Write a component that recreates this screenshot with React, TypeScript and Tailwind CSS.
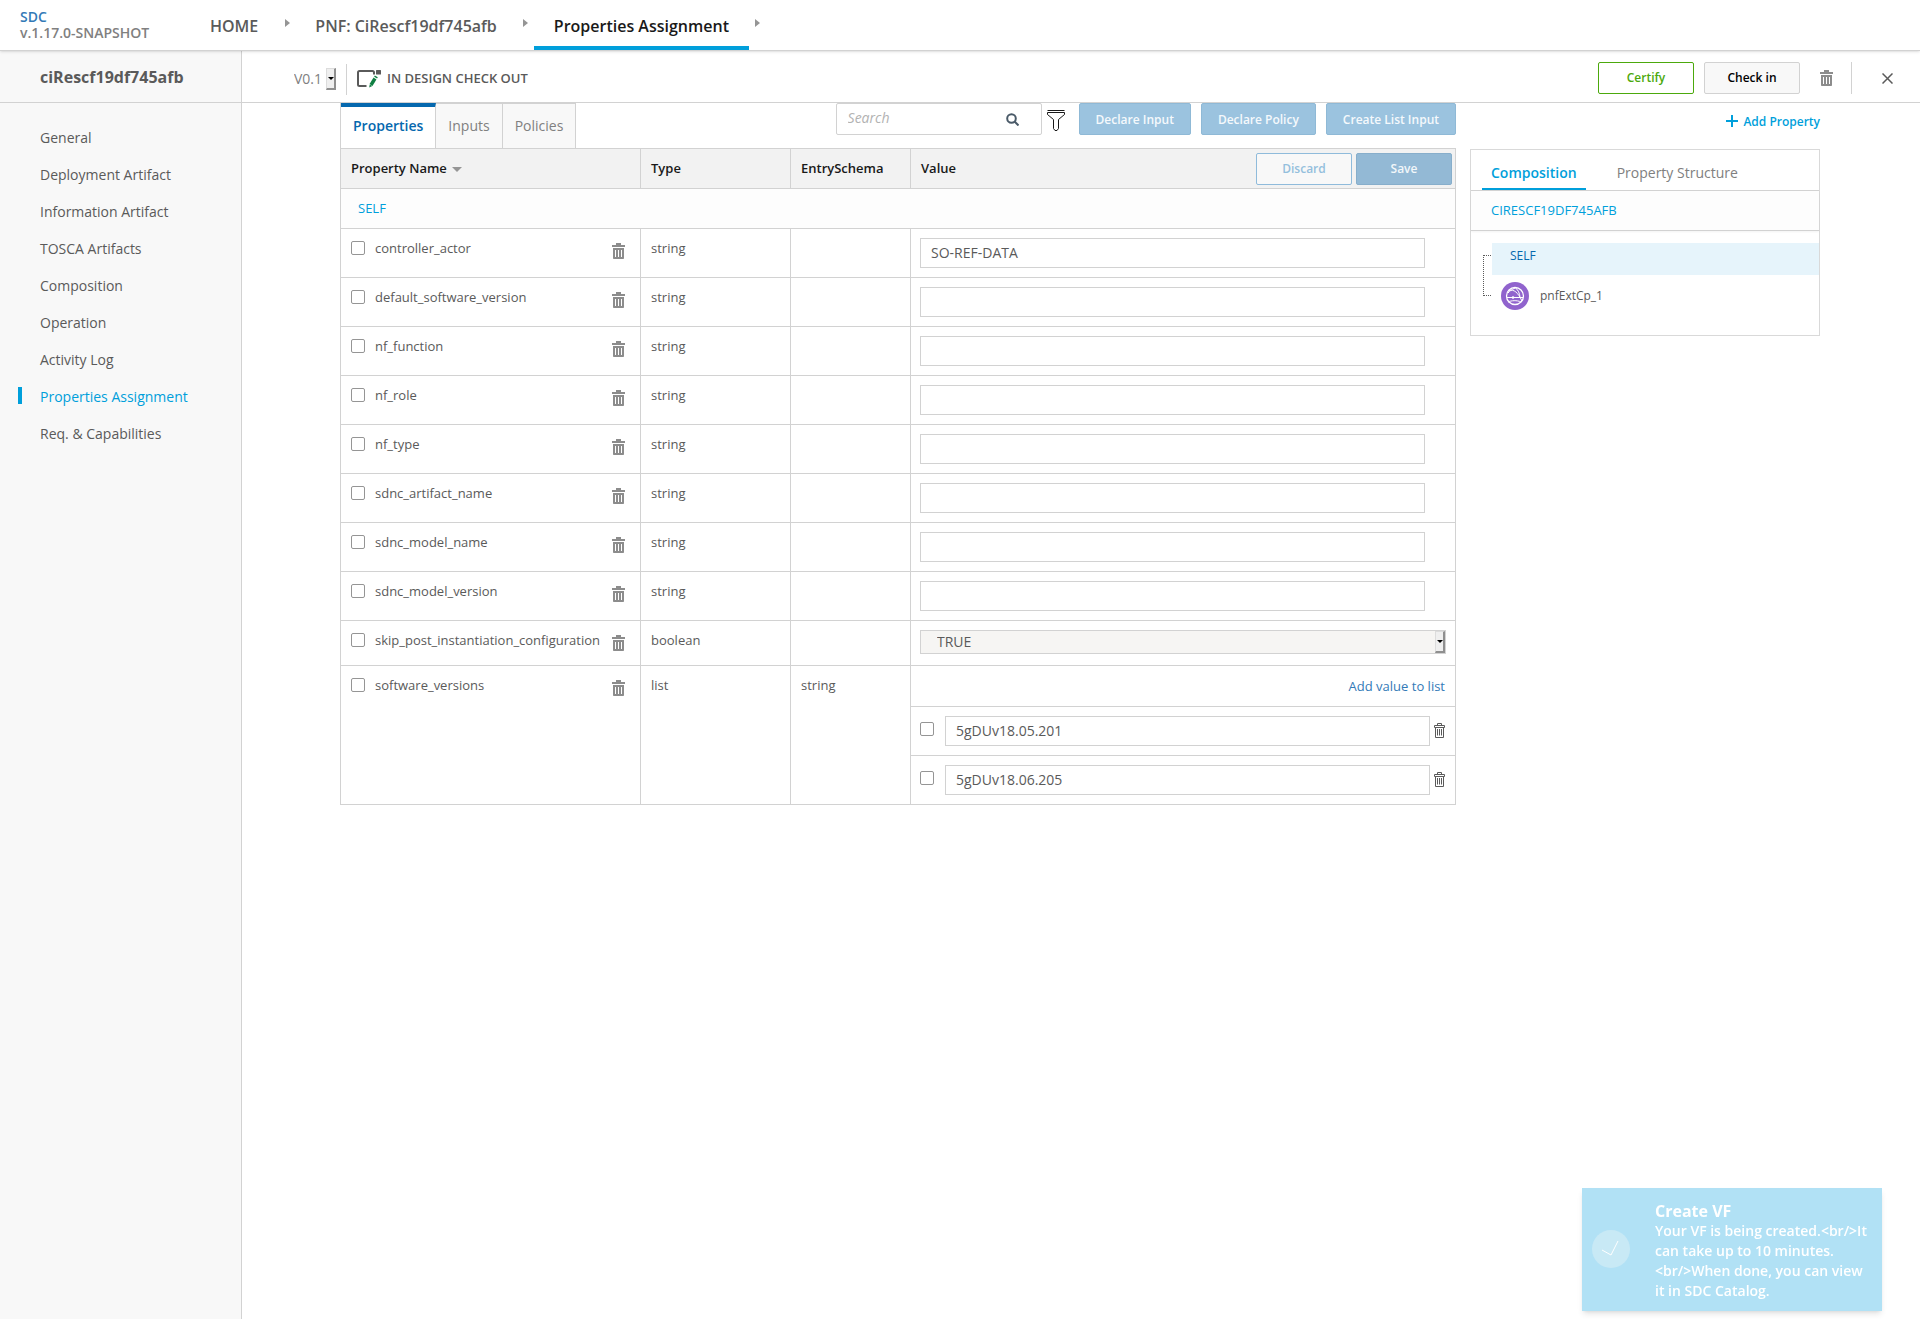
import { useState } from "react"

const MENU = [
  "General",
  "Deployment Artifact",
  "Information Artifact",
  "TOSCA Artifacts",
  "Composition",
  "Operation",
  "Activity Log",
  "Properties Assignment",
  "Req. & Capabilities",
]

const STRING_PROPERTIES = [
  { name: "controller_actor", value: "SO-REF-DATA" },
  { name: "default_software_version", value: "" },
  { name: "nf_function", value: "" },
  { name: "nf_role", value: "" },
  { name: "nf_type", value: "" },
  { name: "sdnc_artifact_name", value: "" },
  { name: "sdnc_model_name", value: "" },
  { name: "sdnc_model_version", value: "" },
]

const VERSIONS = ["5gDUv18.05.201", "5gDUv18.06.205"]

function TrashIcon() {
  return (
    <svg viewBox="0 0 13 16" className="h-4 w-[13px]" fill="#8c8c8c">
      <path d="M4 0h5v2h4v2H0V2h4z" />
      <path fillRule="evenodd" d="M1 5h11v10.2a.8.8 0 0 1-.8.8H1.800a.8.8 0 0 1-.8-.8zM3 7v7h1V7zm3 0v7h1V7zm3 0v7h1V7z" />
    </svg>
  )
}

function TrashOutlineIcon() {
  return (
    <svg viewBox="0 0 11 15" className="h-[15px] w-[11px]" fill="none" stroke="#5a5a5a">
      <path d="M3.500 2.500v-2h4v2M.5 4.500v-2h10v2zM1.500 4.500v10h8v-10M3.500 6v6.500M5.500 6v6.500M7.500 6v6.500" />
    </svg>
  )
}

function CheckOutIcon() {
  return (
    <svg viewBox="0 0 25 19" className="h-[19px] w-[25px]" fill="none">
      <path d="M17 4.500V2.500A1.500 1.500 0 0 0 15.500 1H2.500A1.500 1.500 0 0 0 1 2.500v12A1.500 1.500 0 0 0 2.500 16H9.500" stroke="#5a5a5a" strokeWidth="2" />
      <rect x="19" width="5" height="4.500" rx=".5" fill="#5a5a5a" />
      <path d="M14 15l4-6.500" stroke="#0f7f42" strokeWidth="3.400" />
      <path d="M18.600 7.600l.7-1.200" stroke="#0f7f42" strokeWidth="3.400" />
      <path d="M12.200 17.500l.5-3 2.600 1.600z" fill="#0f7f42" />
    </svg>
  )
}

function FilterIcon() {
  return (
    <svg viewBox="0 0 18 21" className="h-[21px] w-[18px]" fill="none" stroke="#191919">
      <path d="M.5.500h17M.5 2.500h17v2L11.500 9.500v9L10 20.500H8L6.500 18.500v-9L.5 4.500z" />
    </svg>
  )
}

function ConnectionPointIcon() {
  return (
    <svg viewBox="0 0 28 28" className="size-7" fill="none" stroke="#fff">
      <circle cx="14" cy="14" r="14" fill="#9063cd" stroke="none" />
      <circle cx="14" cy="14" r="8.500" strokeWidth="1.300" />
      <path d="M8 8.500c5-1.500 9 2 13 10.500M14 5.500c3 2 5 6 5 10.500M6 15.500h16M7 11c2-2 3-3 7-5M7 20c3-1.500 9-2 13 0" />
      <circle cx="12" cy="15.500" r="1.300" fill="#fff" stroke="none" />
    </svg>
  )
}

function Chevron() {
  return (
    <svg viewBox="0 0 5 8" className="-mt-1 h-2 w-[5px]" fill="#959595">
      <path d="M0 0l5 4-5 4z" />
    </svg>
  )
}

// Old style bevelled arrow that sits at the end of a select
function SelectArrow() {
  return (
    <span className="pointer-events-none absolute inset-y-0 right-0 flex w-[10px] items-center justify-center border border-r-2 border-b-2 border-[#dcdcdc] border-r-[#8f8f8f] border-b-[#8f8f8f] bg-[#efefef]">
      <svg viewBox="0 0 6 3" className="h-[3px] w-[6px]">
        <path d="M0 0h6L3 3z" />
      </svg>
    </span>
  )
}

function Checkbox({ label }: { label: string }) {
  return (
    <input
      type="checkbox"
      aria-label={label}
      className="block size-[14px] shrink-0 appearance-none rounded-xs border border-[#959595] bg-white checked:bg-[#009fdb]"
    />
  )
}

function NameCell({ name }: { name: string }) {
  return (
    <td className="border border-[#d2d2d2] p-0 align-top">
      <div className="flex items-start pt-[11px] pr-[15px] pl-[10px]">
        <span className="flex h-4 items-center">
          <Checkbox label={name} />
        </span>
        <span className="ml-[10px] h-4 leading-4">{name}</span>
        <button aria-label={`Delete ${name}`} className="mt-[3px] ml-auto">
          <TrashIcon />
        </button>
      </div>
    </td>
  )
}

function TextCell({ text }: { text?: string }) {
  return <td className="border border-[#d2d2d2] px-[10px] pt-[11px] pb-0 align-top leading-4">{text}</td>
}

function PropertiesTable() {
  return (
    <table className="w-full table-fixed border-collapse text-[13px] text-[#5a5a5a]">
      <colgroup>
        <col className="w-[300px]" />
        <col className="w-[150px]" />
        <col className="w-[120px]" />
        <col />
      </colgroup>
      <thead>
        <tr className="h-10 bg-[#f2f2f2] text-left text-[#191919]">
          <th className="border border-[#d2d2d2] px-[10px] py-0 font-semibold">
            <span className="flex items-center gap-[5px]">
              Property Name
              <svg viewBox="0 0 10 5" className="mt-px h-[5px] w-[10px]" fill="#959595">
                <path d="M0 0h10L5 5z" />
              </svg>
            </span>
          </th>
          <th className="border border-[#d2d2d2] px-[10px] py-0 font-semibold">Type</th>
          <th className="border border-[#d2d2d2] px-[10px] py-0 font-semibold">EntrySchema</th>
          <th className="border border-[#d2d2d2] py-0 pr-[3px] pl-[10px] font-semibold">
            <div className="flex items-center gap-1">
              <span className="mr-auto">Value</span>
              <button className="h-8 w-24 rounded-xs border border-[#8fbbdb] bg-[#f8f8f8] text-xs font-semibold text-[#94bfdd]">
                Discard
              </button>
              <button className="h-8 w-24 rounded-xs border border-[#87aecb] bg-[#93b9d5] text-xs font-semibold text-[#f2f7fa]">
                Save
              </button>
            </div>
          </th>
        </tr>
      </thead>
      <tbody>
        <tr className="h-10">
          <td colSpan={4} className="border border-[#d2d2d2] bg-[#fdfdfd] px-[17px] py-0 text-[#009fdb]">
            SELF
          </td>
        </tr>
        {STRING_PROPERTIES.map((property) => (
          <tr key={property.name} className="h-[49px]">
            <NameCell name={property.name} />
            <TextCell text="string" />
            <TextCell />
            <td className="border border-[#d2d2d2] py-0 pr-[30px] pl-[9px]">
              <input
                type="text"
                aria-label={`${property.name} value`}
                defaultValue={property.value}
                className="block h-[30px] w-full border border-[#d2d2d2] px-[10px] pb-[2px] text-sm"
              />
            </td>
          </tr>
        ))}
        <tr className="h-[45px]">
          <NameCell name="skip_post_instantiation_configuration" />
          <TextCell text="boolean" />
          <TextCell />
          <td className="border border-[#d2d2d2] px-[9px] py-0 align-top">
            <div className="relative mt-[9px] border border-[#d2d2d2] bg-[#f6f5f3]">
              <select aria-label="skip_post_instantiation_configuration value" className="block h-[22px] w-full appearance-none px-4 text-sm leading-5">
                <option>TRUE</option>
                <option>FALSE</option>
              </select>
              <SelectArrow />
            </div>
          </td>
        </tr>
        <tr>
          <NameCell name="software_versions" />
          <TextCell text="list" />
          <TextCell text="string" />
          <td className="border border-[#d2d2d2] p-0 align-top">
            <div className="flex h-10 items-center justify-end pt-[2px] pr-[10px]">
              <button className="text-[#337ab7]">Add value to list</button>
            </div>
            {VERSIONS.map((version, index) => (
              <div key={version} className="flex h-[49px] items-center border-t border-[#d2d2d2] pr-[10px] pl-[9px]">
                <span className="pb-1">
                  <Checkbox label={`Select value ${index + 1}`} />
                </span>
                <input
                  type="text"
                  aria-label={`Value ${index + 1}`}
                  defaultValue={version}
                  className="mr-1 ml-[11px] h-[30px] min-w-0 flex-1 border border-[#d2d2d2] px-[10px] pb-[2px] text-sm"
                />
                <button aria-label={`Delete value ${index + 1}`} className="pb-[2px]">
                  <TrashOutlineIcon />
                </button>
              </div>
            ))}
          </td>
        </tr>
      </tbody>
    </table>
  )
}

function Toolbar() {
  const [tab, setTab] = useState("Properties")

  return (
    <div className="flex h-[45px] items-start">
      <div className="flex h-full border-l border-[#d2d2d2]">
        {["Properties", "Inputs", "Policies"].map((name) => (
          <button
            key={name}
            onClick={() => setTab(name)}
            className={
              tab === name
                ? "border-t-4 border-r border-t-[#0568ae] border-r-[#d2d2d2] px-3 pb-1 text-sm font-semibold text-[#0568ae]"
                : "border-t border-r border-[#d2d2d2] bg-[#f8f8f8] px-3 text-sm text-[#808080]"
            }
          >
            {name}
          </button>
        ))}
      </div>
      <div className="ml-auto flex h-8 items-center">
        <div className="flex h-8 w-[206px] items-center rounded-xs border border-[#d2d2d2] pr-[22px] pl-[11px]">
          <input
            type="text"
            aria-label="Search"
            placeholder="Search"
            className="min-w-0 flex-1 pb-[2px] text-sm italic outline-none placeholder:text-[#b2b2b2]"
          />
          <svg viewBox="0 0 13 13" className="size-[13px]" fill="none" stroke="#4a5a68" strokeWidth="2">
            <circle cx="5.500" cy="5.500" r="4.300" />
            <path d="M8.500 8.500l4 4" />
          </svg>
        </div>
        <button aria-label="Filter" className="mt-[3px] mr-[14px] ml-[5px]">
          <FilterIcon />
        </button>
        <div className="flex gap-[10px]">
          {["Declare Input", "Declare Policy", "Create List Input"].map((name) => (
            <button key={name} className="h-8 rounded-xs border border-[#8fb9d6] bg-[#9bc3df] px-4 pt-px text-xs font-semibold text-[#f5f9fc]">
              {name}
            </button>
          ))}
        </div>
      </div>
    </div>
  )
}

function CompositionPanel() {
  return (
    <aside className="w-[350px] shrink-0">
      <div className="flex h-[46px] items-center justify-end pb-2">
        <button className="flex items-center gap-[5px] text-xs font-semibold text-[#009fdb]">
          <svg viewBox="0 0 12 12" className="-mt-[2px] size-3" fill="none" stroke="#009fdb" strokeWidth="2">
            <path d="M6 0v12M0 6h12" />
          </svg>
          Add Property
        </button>
      </div>
      <div className="h-[187px] border border-[#d9d9d9]">
        <div className="flex h-[41px] border-b border-[#d2d2d2] pl-[11px] text-sm">
          <button className="border-b-2 border-[#009fdb] px-[9px] pt-2 font-semibold text-[#009fdb]">Composition</button>
          <button className="ml-[22px] px-[9px] pt-[6px] text-[#808080]">Property Structure</button>
        </div>
        <div className="flex h-10 items-center border-b border-[#d2d2d2] bg-[#fdfdfd] px-5 text-[13px] text-[#009fdb] shadow-xs">
          CIRESCF19DF745AFB
        </div>
        <div className="mt-3 flex text-xs">
          <div className="mt-3 ml-3 h-[41px] w-2 border border-r-0 border-dotted border-[#5a5a5a]" />
          <ul className="ml-px flex-1">
            <li className="h-8 bg-[#e6f4fb] pt-[5px] pl-[18px] leading-4 text-[#0568ae]">
              <a href="#self" className="block">SELF</a>
            </li>
            <li className="mt-[7px] ml-[9px]">
              <a href="#pnfExtCp_1" className="flex items-center gap-[11px] text-[#5a5a5a]">
                <ConnectionPointIcon />
                pnfExtCp_1
              </a>
            </li>
          </ul>
        </div>
      </div>
    </aside>
  )
}

function Toast() {
  return (
    <div role="status" className="fixed right-[38px] bottom-2 flex w-[300px] items-center bg-[#b1e1f5] pt-[13px] pr-3 pb-[10px] pl-[10px] font-semibold text-white shadow-md">
      <svg viewBox="0 0 38 38" className="-mt-1 size-[38px] shrink-0" fill="none">
        <circle cx="19" cy="19" r="19" fill="#c8e9f5" />
        <path d="M10 20l9 5 7-14" stroke="#fff" />
      </svg>
      <div className="ml-[25px] text-sm leading-5">
        <div className="text-base leading-5 font-bold">Create VF</div>
        {"Your VF is being created.<br/>It can take up to 10 minutes.<br/>When done, you can view it in SDC Catalog."}
      </div>
    </div>
  )
}

export default function App() {
  return (
    <div className="flex min-h-screen flex-col bg-white font-['Open_Sans',sans-serif] text-[#5a5a5a]">
      <header className="relative flex h-[51px] items-center border-b border-[#d2d2d2] bg-white shadow-sm">
        <div className="w-[210px] pl-5 text-sm leading-4 font-semibold text-[#808080]">
          <a href="#home" className="block text-[#337ab7]">SDC</a>
          <span className="block">v.1.17.0-SNAPSHOT</span>
        </div>
        <nav className="flex h-full items-center text-base font-semibold">
          <a href="#home" className="mr-[27px] pt-[2px]">HOME</a>
          <Chevron />
          <a href="#pnf" className="mr-[26px] ml-[25px] pt-[2px]">PNF: CiRescf19df745afb</a>
          <Chevron />
          <a href="#properties" className="mr-[6px] ml-[6px] flex h-full items-center border-b-4 border-[#009fdb] px-5 pt-[6px] text-[#191919]">
            Properties Assignment
          </a>
          <Chevron />
        </nav>
      </header>

      <div className="flex flex-1">
        <aside className="w-[242px] shrink-0 border-r border-[#d2d2d2] bg-[#f8f8f8]">
          <h1 className="flex h-[52px] items-center border-b border-[#d2d2d2] pl-10 text-base font-bold">ciRescf19df745afb</h1>
          <ul className="pt-4 text-sm">
            {MENU.map((item) => (
              <li key={item} className="flex h-[37px] items-center">
                {item === "Properties Assignment" ? (
                  <>
                    <span className="mr-[18px] mb-[2px] ml-[18px] h-[17px] w-1 bg-[#009fdb]" />
                    <a href="#menu" className="text-[#009fdb]">{item}</a>
                  </>
                ) : (
                  <a href="#menu" className="ml-10">{item}</a>
                )}
              </li>
            ))}
          </ul>
        </aside>

        <main className="min-w-0 flex-1">
          <div className="flex h-[52px] items-center justify-between border-b border-[#d2d2d2] pr-[27px] pl-[52px]">
            <div className="flex items-center pt-[5px]">
              <div className="relative w-[42px]">
                <select aria-label="Version" className="block h-[22px] w-full appearance-none text-sm text-[#808080]">
                  <option>V0.1</option>
                </select>
                <SelectArrow />
              </div>
              <div className="mx-[10px] h-[31px] w-px bg-[#d2d2d2]" />
              <CheckOutIcon />
              <span className="ml-[5px] text-[13px] font-semibold">IN DESIGN CHECK OUT</span>
            </div>
            <div className="flex items-center pt-[3px]">
              <button className="h-8 w-24 rounded-xs border border-[#4ca90c] text-xs font-semibold text-[#4ca90c]">Certify</button>
              <button className="ml-[10px] h-8 w-24 rounded-xs border border-[#d2d2d2] bg-[#f8f8f8] text-xs font-semibold text-black">Check in</button>
              <button aria-label="Delete" className="ml-5">
                <TrashIcon />
              </button>
              <div className="mr-[30px] ml-[18px] h-8 w-px bg-[#d2d2d2]" />
              <button aria-label="Close">
                <svg viewBox="0 0 11 11" className="size-[11px]" stroke="#5a5a5a" strokeWidth="1.500">
                  <path d="M.5.500l10 10M10.500.500l-10 10" />
                </svg>
              </button>
            </div>
          </div>

          <div className="flex gap-[14px] pr-[100px] pl-[98px]">
            <section className="min-w-0 flex-1">
              <Toolbar />
              <PropertiesTable />
            </section>
            <CompositionPanel />
          </div>
        </main>
      </div>
      <Toast />
    </div>
  )
}
